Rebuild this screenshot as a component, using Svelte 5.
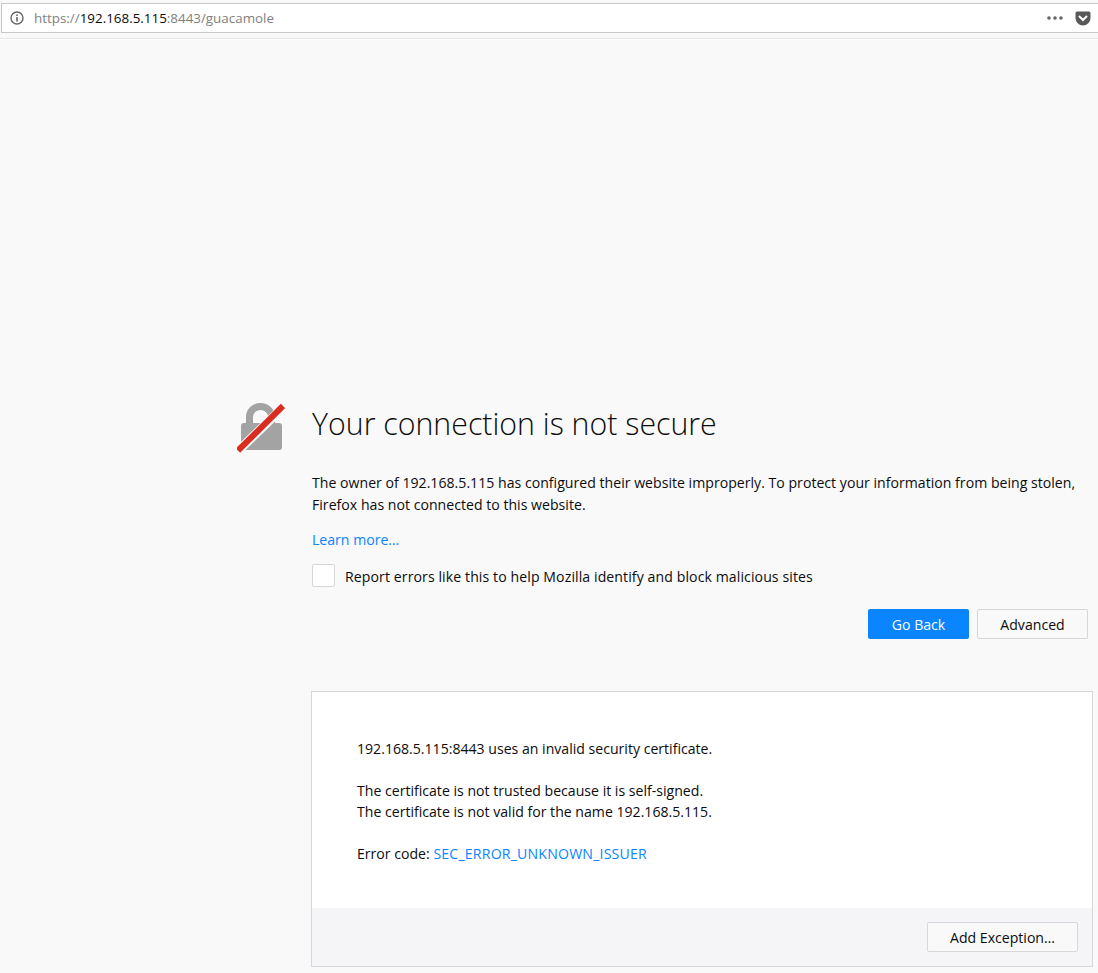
<script>
  const host = "192.168.5.115";
</script>

<div class="toolbar">
  <div class="urlbar">
    <svg class="info" width="14" height="14" viewBox="0 0 14 14">
      <circle cx="7" cy="7" r="6" fill="none" stroke="#666" stroke-width="1.4"/>
      <rect x="6.2" y="6" width="1.6" height="4.6" fill="#666"/>
      <rect x="6.2" y="3.4" width="1.6" height="1.6" fill="#666"/>
    </svg>
    <span class="url"><span class="dim">https://</span>{host}<span class="dim">:8443/guacamole</span></span>
    <span class="spacer"></span>
    <svg class="dots" width="16" height="4" viewBox="0 0 16 4">
      <circle cx="2" cy="2" r="1.8" fill="#666"/>
      <circle cx="8" cy="2" r="1.8" fill="#666"/>
      <circle cx="14" cy="2" r="1.8" fill="#666"/>
    </svg>
    <svg class="pocket" width="16" height="15" viewBox="0 0 16 15">
      <path d="M2 0.5h12a1.5 1.5 0 0 1 1.5 1.5v5a7.5 7.5 0 0 1-15 0v-5a1.5 1.5 0 0 1 1.5-1.5z" fill="#595959"/>
      <path d="M4.5 5.500l3.500 3.500 3.500-3.500" fill="none" stroke="#fff" stroke-width="2" stroke-linecap="round"/>
    </svg>
  </div>
</div>

<main class="page">
  <div class="error">
    <svg class="lock" width="48" height="50" viewBox="0 0 48 50">
      <path d="M9 22v-8.500a14.500 13.500 0 0 1 29 0v8.500h-7v-8.500a7.500 6.500 0 0 0-15 0v8.500z" fill="#a3a3a3"/>
      <rect x="4" y="20" width="41" height="27" rx="3" fill="#a3a3a3"/>
      <path d="M47 3.500L1 48" stroke="#f9f9fa" stroke-width="9"/>
      <path d="M46 3L1 47.500" stroke="#d92d20" stroke-width="6"/>
    </svg>
    <div class="body">
      <h1>Your connection is not secure</h1>
      <p class="desc">The owner of {host} has configured their website improperly. To protect your information from being stolen, Firefox has not connected to this website.</p>
      <a class="link learn" href="#learn">Learn more…</a>
      <label class="report">
        <span class="check"></span>
        <span class="report-text">Report errors like this to help Mozilla identify and block malicious sites</span>
      </label>
      <div class="buttons">
        <button class="primary">Go Back</button>
        <button class="secondary">Advanced</button>
      </div>
    </div>
  </div>

  <section class="details">
    <div class="details-text">
      <p>{host}:8443 uses an invalid security certificate.</p>
      <p>The certificate is not trusted because it is self-signed.<br>The certificate is not valid for the name {host}.</p>
      <p>Error code: <a class="link code" href="#code">SEC_ERROR_UNKNOWN_ISSUER</a></p>
    </div>
    <div class="details-foot">
      <button class="exception">Add Exception…</button>
    </div>
  </section>
</main>

<style>
  :global(body) {
    background: #f9f9fa;
    font-family: "Open Sans", "Noto Sans", sans-serif;
    color: #0c0c0d;
  }
  .toolbar {
    height: 39px;
    padding-top: 3px;
    box-sizing: border-box;
    border-bottom: 1px solid #e3e3e3;
    box-shadow: 0 1px 0 #fff;
  }
  .urlbar {
    height: 30px;
    box-sizing: border-box;
    margin-left: 1px;
    background: #fff;
    border: 1px solid #c8c8c8;
    border-right: 0;
    display: flex;
    align-items: center;
    padding: 0 7px 0 8px;
  }
  .info { margin-right: 10px; }
  .url {
    font-size: 13.4px;
    color: #0c0c0d;
  }
  .dim { color: #7f7f7f; }
  .spacer { flex: 1; }
  .dots { margin-right: 12px; }
  .page {
    padding: 364px 5px 0 237px;
  }
  .error {
    display: flex;
  }
  .lock {
    flex: none;
    width: 48px;
    margin-right: 27px;
  }
  .body {
    flex: 1;
    padding-right: 5px;
  }
  h1 {
    margin: 0;
    font-size: 30.3px;
    font-weight: 300;
    line-height: 42px;
  }
  .desc {
    margin: 27px 0 0;
    font-size: 14.1px;
    line-height: 21.5px;
    letter-spacing: 0.015px;
  }
  .link {
    color: #0a84ff;
    text-decoration: none;
  }
  .learn {
    display: block;
    margin-top: 14px;
    font-size: 14.1px;
    line-height: 21px;
  }
  .report {
    display: flex;
    align-items: center;
    gap: 10px;
    margin-top: 14px;
    font-size: 14.1px;
  }
  .report-text {
    padding-top: 2px;
    letter-spacing: 0.09px;
  }
  .check {
    width: 23px;
    height: 23px;
    box-sizing: border-box;
    background: #fff;
    border: 1px solid #d7d7db;
    border-radius: 2px;
  }
  .buttons {
    display: flex;
    justify-content: flex-end;
    gap: 8px;
    margin-top: 22px;
  }
  button {
    font-family: inherit;
    font-size: 14.1px;
    height: 30px;
    border-radius: 2px;
    padding: 0;
  }
  .primary {
    width: 101px;
    background: #0a84ff;
    color: #fff;
    border: 0;
  }
  .secondary {
    width: 111px;
    background: #f9f9fa;
    color: #0c0c0d;
    border: 1px solid #d7d7db;
  }
  .details {
    margin: 52px 0 0 74px;
    border: 1px solid #d7d7db;
    background: #fff;
  }
  .details-text {
    padding: 46px 45px 44px;
    font-size: 14.1px;
    line-height: 21px;
  }
  .details-text p {
    margin: 0 0 21px;
  }
  .details-text p:last-child {
    margin-bottom: 0;
  }
  .code {
    letter-spacing: 0.2px;
  }
  .details-foot {
    background: #f5f5f7;
    padding: 14px 14px 14px 0;
    display: flex;
    justify-content: flex-end;
  }
  .exception {
    width: 151px;
    background: #f9f9fa;
    color: #0c0c0d;
    border: 1px solid #d7d7db;
  }
</style>
